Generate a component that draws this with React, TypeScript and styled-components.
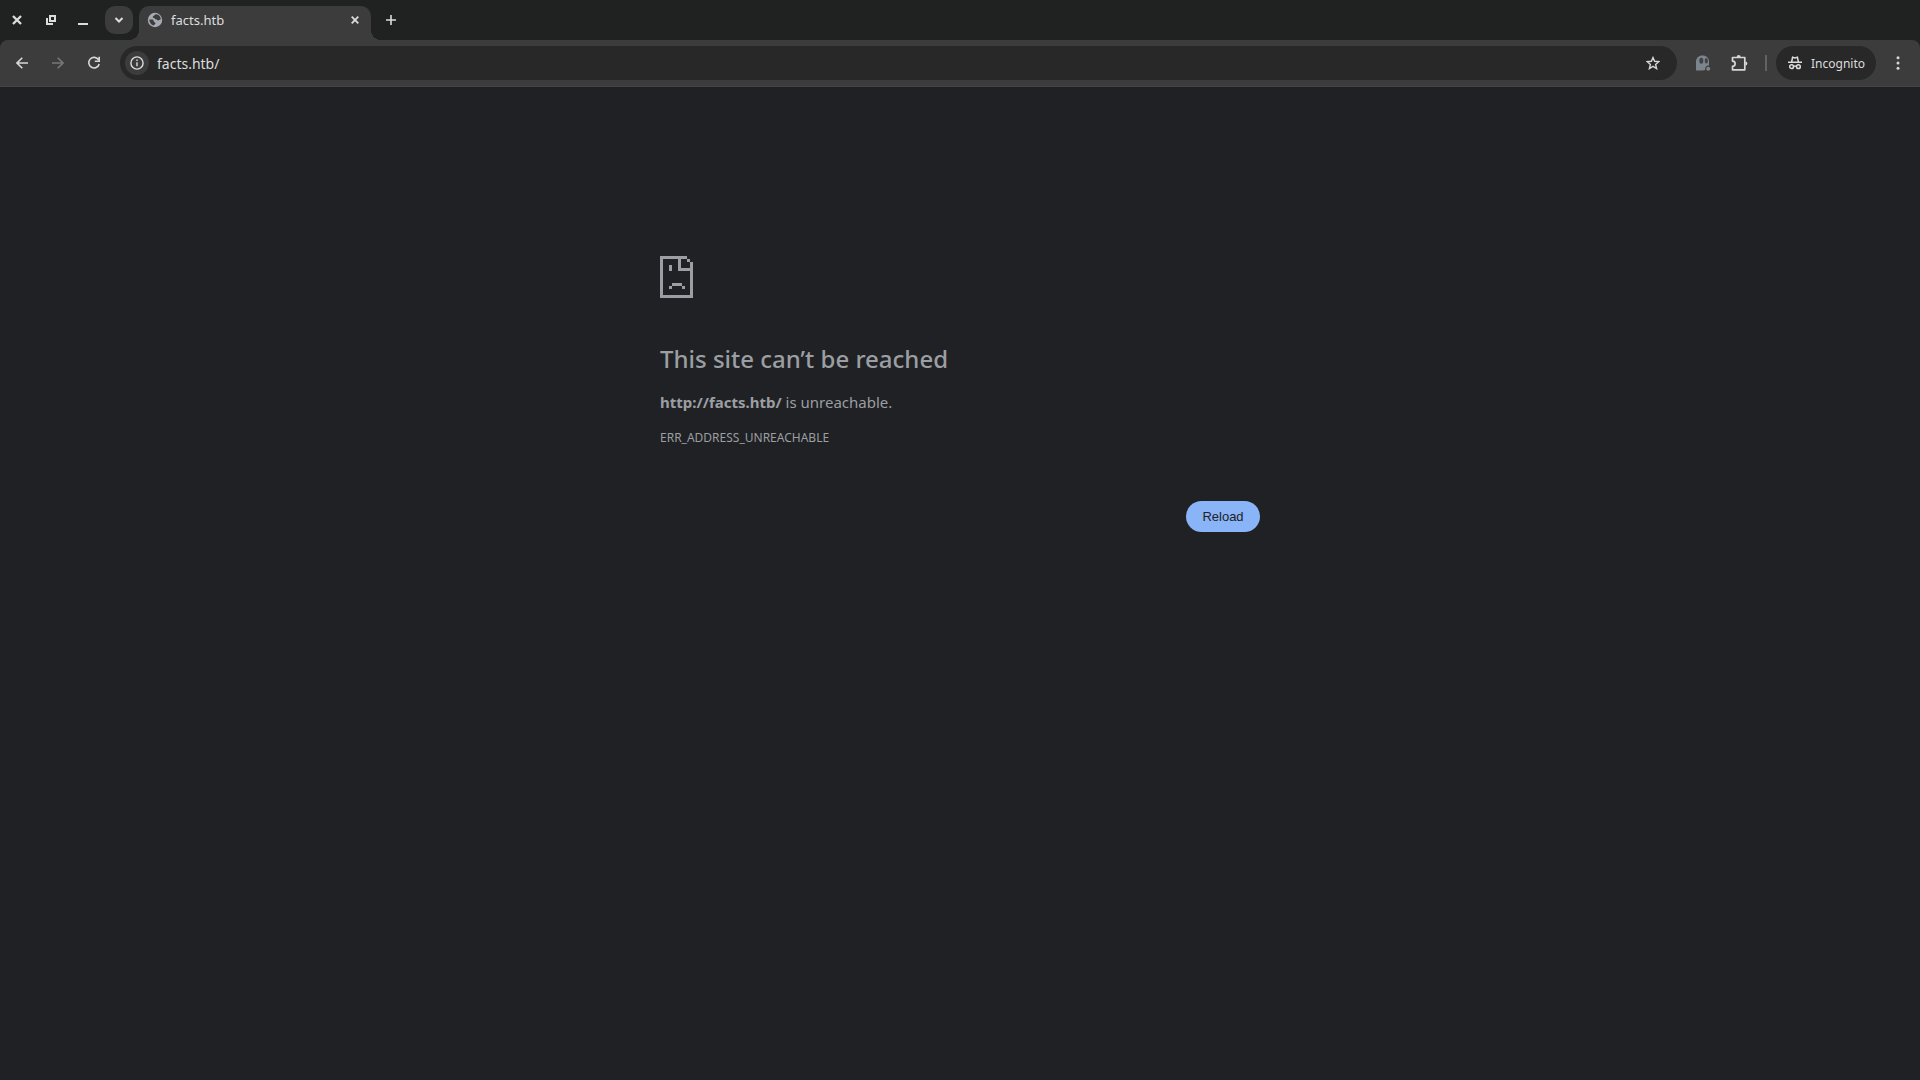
import React from "react";
import styled, { createGlobalStyle } from "styled-components";

const Global = createGlobalStyle`
  *, *::before, *::after { box-sizing: border-box; }
  html { background: #202124; }
  body {
    margin: 0;
    font-family: "Noto Sans", "Open Sans", sans-serif;
    background: #202124;
    color: #9b9ea2;
  }
`;

const Browser = styled.div`
  display: flex;
  flex-direction: column;
  min-height: 100vh;
`;

const TabStrip = styled.header`
  display: flex;
  height: 40px;
  padding: 6px 0 0 4px;
  background: #202221;
`;

const PlainButton = styled.button`
  display: flex;
  align-items: center;
  justify-content: center;
  flex: none;
  padding: 0;
  border: 0;
  background: none;
  color: #dcdcde;
`;

const WindowControls = styled.div`
  display: flex;
  padding-right: 11px;
`;

const WindowButton = styled(PlainButton)<{ $width: number }>`
  width: ${(p) => p.$width}px;
  height: 28px;
`;

const TabSearch = styled(PlainButton)`
  width: 28px;
  height: 28px;
  margin-right: 6px;
  border-radius: 10px;
  background: #3c3c3c;
`;

const Tab = styled.div`
  position: relative;
  display: flex;
  align-items: flex-start;
  width: 232px;
  height: 34px;
  padding: 0 8px;
  border-radius: 10px 10px 0 0;
  background: #3c3c3c;
  &::before, &::after {
    content: "";
    position: absolute;
    bottom: 0;
    width: 10px;
    height: 10px;
  }
  &::before {
    right: 100%;
    background: radial-gradient(circle at 0 0, transparent 10px, #3c3c3c 10px);
  }
  &::after {
    left: 100%;
    background: radial-gradient(circle at 100% 0, transparent 10px, #3c3c3c 10px);
  }
`;

const TabTitle = styled.span`
  flex: 1;
  padding-left: 8px;
  color: #dcdcde;
  font-size: 13px;
  line-height: 28px;
`;

const Favicon = styled.svg`
  flex: none;
  margin-top: 6px;
`;

const TabClose = styled(PlainButton)`
  width: 16px;
  height: 28px;
`;

const NewTab = styled(PlainButton)`
  width: 28px;
  height: 28px;
  margin-left: 6px;
`;

const ToolbarBack = styled.div`
  background: #202221;
`;

const Toolbar = styled.nav`
  display: flex;
  align-items: center;
  padding: 6px 4px;
  border-bottom: 1px solid #444444;
  border-radius: 8px 8px 0 0;
  background: #3c3c3c;
`;

const ToolButton = styled(PlainButton)<{ $dim?: boolean }>`
  width: 36px;
  height: 34px;
  color: ${(p) => (p.$dim ? "#74777a" : "#d5d7da")};
`;

const Omnibox = styled.div`
  display: flex;
  flex: 1;
  align-items: center;
  height: 34px;
  margin: 0 8px;
  padding: 0 6px 0 5px;
  border-radius: 17px;
  background: #282828;
`;

const SiteInfo = styled(PlainButton)`
  width: 24px;
  height: 24px;
  border-radius: 12px;
  background: #3c3c3c;
`;

const Address = styled.input`
  flex: 1;
  min-width: 0;
  height: 28px;
  padding: 0 0 0 8px;
  border: 0;
  outline: 0;
  background: none;
  color: #dcdcde;
  font: 14px "Noto Sans", "Open Sans", sans-serif;
`;

const Divider = styled.div`
  width: 2px;
  height: 16px;
  margin: 0 9px 0 8px;
  background: #5f6368;
`;

const Incognito = styled(PlainButton)`
  gap: 8px;
  width: 100px;
  height: 34px;
  border-radius: 17px;
  background: #282828;
  font: 12px "Noto Sans", "Open Sans", sans-serif;
`;

const MenuButton = styled(ToolButton)`
  margin-left: 4px;
`;

const Page = styled.main`
  width: 100%;
  max-width: 600px;
  margin: 0 auto;
  padding-top: 169px;
`;

const SadPage = styled.svg`
  display: block;
  fill: #9b9ea2;
`;

const Heading = styled.h1`
  margin: 46px 0 16px;
  font-size: 24px;
  font-weight: 500;
  line-height: 30px;
`;

const Message = styled.p`
  margin: 0;
  font-size: 15px;
  line-height: 24px;
`;

const ErrorCode = styled.div`
  margin-top: 12px;
  font-size: 12px;
  line-height: 24px;
`;

const Actions = styled.div`
  display: flex;
  justify-content: flex-end;
  margin-top: 51px;
`;

const Reload = styled.button`
  min-width: 74px;
  height: 31px;
  padding: 0 16px;
  border: 0;
  border-radius: 20px;
  background: #8ab4f8;
  color: #202124;
  font: 13px "Liberation Sans", Arial, sans-serif;
`;

const Stroke = ({ size, d, width = 2 }: { size: number; d: string; width?: number }) => (
  <svg width={size} height={size} viewBox={`0 0 ${size} ${size}`} fill="none" stroke="currentColor" strokeWidth={width} aria-hidden="true">
    <path d={d} />
  </svg>
);

export default function App() {
  return (
    <>
      <Global />
      <Browser>
        <TabStrip>
          <WindowControls>
            <WindowButton $width={26} aria-label="Close window">
              <Stroke size={10} d="M1 1l8 8M9 1L1 9" width={2.4} />
            </WindowButton>
            <WindowButton $width={42} aria-label="Restore window">
              <Stroke size={10} d="M4 1h5v5H4zM1 3v6h6" />
            </WindowButton>
            <WindowButton $width={22} aria-label="Minimize window">
              <Stroke size={10} d="M0 9h10" />
            </WindowButton>
          </WindowControls>
          <TabSearch aria-label="Search tabs">
            <Stroke size={10} d="M1.500 3l3.500 3.500L8.500 3" />
          </TabSearch>
          <Tab>
            <Favicon width="16" height="16" viewBox="0 0 16 16" aria-hidden="true">
              <circle cx="8" cy="8" r="7.200" fill="#a5abb1" />
              <path d="M9 2.300C7.500 2.600 7.900 3.600 6.500 4c-1.200.4-.9 1.900.4 1.900 1.200 0 .9 1.400 2.200 1.400.9 0 .9 1.300 2 1.200 1-.1 1.300-1 2.600-.9C13.900 4.900 12 2.600 9 2.300zM2.300 7.500c-.1 3 1.700 5.200 4.500 6 .1-1.100 1.600-.9 1.700-2 .1-1.200-1.300-.9-1.700-1.900-.3-.8-.2-1.900-1.300-2.100z" fill="#3c3c3c" />
            </Favicon>
            <TabTitle>facts.htb</TabTitle>
            <TabClose aria-label="Close tab">
              <Stroke size={8} d="M.7.7l6.600 6.600M7.300.7L.7 7.300" width={1.8} />
            </TabClose>
          </Tab>
          <NewTab aria-label="New tab">
            <Stroke size={10} d="M5 0v10M0 5h10" width={1.6} />
          </NewTab>
        </TabStrip>
        <ToolbarBack>
          <Toolbar aria-label="Browser toolbar">
            <ToolButton aria-label="Back">
              <Stroke size={12} d="M12 6H1.200M6.300.7L1 6l5.300 5.300" width={1.6} />
            </ToolButton>
            <ToolButton aria-label="Forward" $dim>
              <Stroke size={12} d="M0 6h10.800M5.700.7L11 6l-5.300 5.300" width={1.6} />
            </ToolButton>
            <ToolButton aria-label="Reload page">
              <Stroke size={14} d="M11.600 3.900A5.300 5.300 0 1 0 12.200 8M12.200.8v4.400H7.800" width={1.6} />
            </ToolButton>
            <Omnibox>
              <SiteInfo aria-label="View site information">
                <svg width="14" height="14" viewBox="0 0 14 14" fill="none" stroke="currentColor" strokeWidth="1.4" aria-hidden="true">
                  <circle cx="7" cy="7" r="6.100" />
                  <path d="M7 6.200v4M7 3.600v1.500" />
                </svg>
              </SiteInfo>
              <Address aria-label="Address" defaultValue="facts.htb/" spellCheck={false} />
              <ToolButton aria-label="Bookmark this tab">
                <Stroke size={14} d="M7 1.600l1.600 3.700 4.200.4-3.200 2.800 1 4.100L7 10.400l-3.600 2.200 1-4.100-3.200-2.800 4.200-.4z" width={1.4} />
              </ToolButton>
            </Omnibox>
            <ToolButton aria-label="Ghost extension" $dim>
              <svg width="16" height="16" viewBox="0 0 16 16" aria-hidden="true">
                <path d="M1 15.500V7C1 3 3.500.5 7.500.5S14 3 14 6.500V10.500a3.500 3.500 0 0 0-3.800 4.500L7.500 15.500z" fill="#7c848c" />
                <ellipse cx="6.300" cy="5.800" rx="2" ry="3" fill="#3f4347" />
                <ellipse cx="11.300" cy="5.800" rx="1.600" ry="2.800" fill="#3f4347" />
                <circle cx="13.200" cy="13.700" r="2" fill="#7c848c" />
              </svg>
            </ToolButton>
            <ToolButton aria-label="Extensions">
              <svg width="18" height="18" viewBox="0 0 18 18" aria-hidden="true">
                <path d="M2.500 3.500h12.300v12.300H2.500v-3.500a2.600 2.600 0 0 0 0-5.200z" fill="none" stroke="currentColor" strokeWidth="1.7" strokeLinejoin="round" />
                <path d="M6.700 3a2 2 0 0 1 4 0zM15.400 7.600a2 2 0 0 1 0 4z" fill="currentColor" />
              </svg>
            </ToolButton>
            <Divider />
            <Incognito>
              <svg width="16" height="16" viewBox="0 0 16 16" fill="none" stroke="currentColor" strokeWidth="1.5" aria-hidden="true">
                <path d="M1 7.200h14M4.600 7l1-4.700 2.400.7 2.400-.7 1 4.700M6.600 11.400q1.400-.7 2.800 0" />
                <circle cx="4.600" cy="11.700" r="1.900" />
                <circle cx="11.400" cy="11.700" r="1.900" />
              </svg>
              Incognito
            </Incognito>
            <MenuButton aria-label="Browser menu">
              <svg width="4" height="14" viewBox="0 0 4 14" fill="currentColor" aria-hidden="true">
                <circle cx="2" cy="1.700" r="1.500" />
                <circle cx="2" cy="7" r="1.500" />
                <circle cx="2" cy="12.300" r="1.500" />
              </svg>
            </MenuButton>
          </Toolbar>
        </ToolbarBack>
        <Page>
          <SadPage width="33" height="42" viewBox="0 0 33 42" aria-hidden="true">
            <path d="M0 0h27v3h-6v9h12v30H0zM3 3v36h27V15H18V3zM27 3h3v3h-3zM30 6h3v6h-3zM9 9h3v6H9zM12 27h10v3H12zM9 30h3v3H9zM22 30h3v3h-3z" fillRule="evenodd" />
          </SadPage>
          <Heading>This site can’t be reached</Heading>
          <Message>
            <strong>http://facts.htb/</strong> is unreachable.
          </Message>
          <ErrorCode>ERR_ADDRESS_UNREACHABLE</ErrorCode>
          <Actions>
            <Reload>Reload</Reload>
          </Actions>
        </Page>
      </Browser>
    </>
  );
}
